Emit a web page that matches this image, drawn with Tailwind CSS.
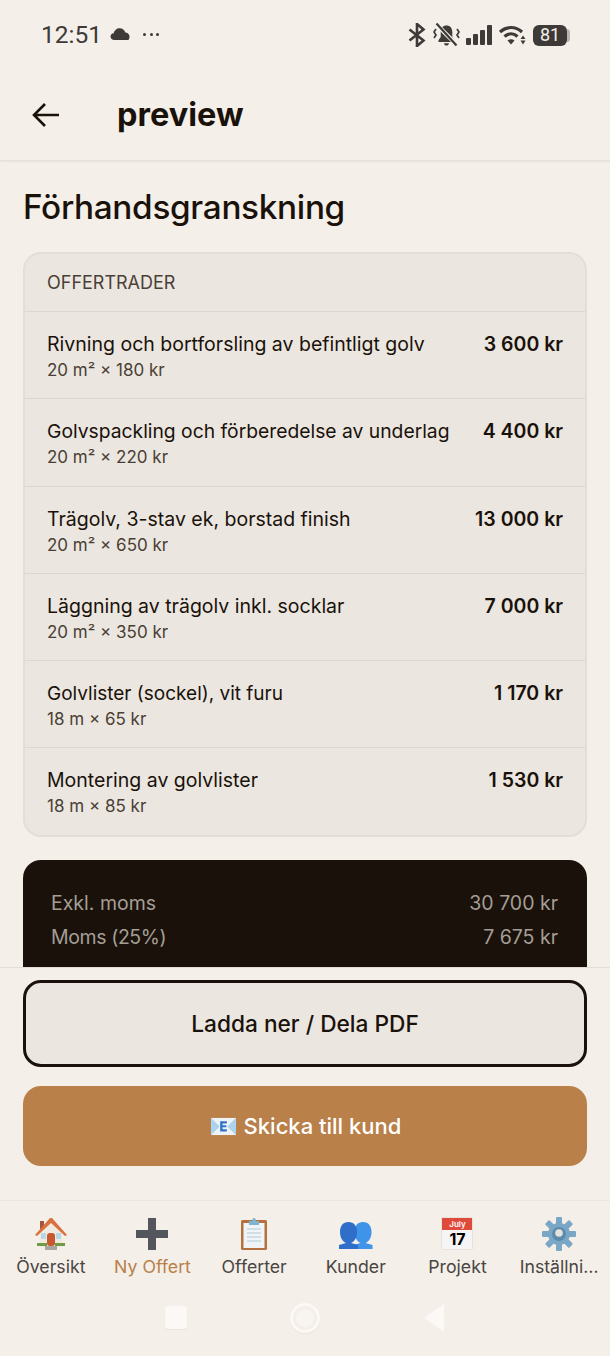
<!DOCTYPE html>
<html lang="en">
<head>
  <meta charset="UTF-8" />
  <meta name="viewport" content="width=device-width, initial-scale=1" />
  <title>preview</title>
  <script src="https://cdn.jsdelivr.net/npm/@tailwindcss/browser@4"></script>
</head>
<body class="w-[610px] h-[1356px] overflow-hidden bg-[#f4efe9] font-['Inter',sans-serif] text-[#1a120a] flex flex-col">

  <!-- status bar -->
  <div class="h-[70px] shrink-0 flex items-center justify-between pl-[41px] pr-[40px] text-[#3d3a38]">
    <div class="flex items-center">
      <span class="text-[24.500px] font-['Roboto',sans-serif] leading-none">12:51</span>
      <svg class="ml-[8px] mb-[3px]" width="20" height="14" viewBox="0 0 20 14"><path fill="#3d3a38" d="M4.500 13C2 13 .5 11.500.5 9.600c0-1.800 1.300-3.200 3.200-3.400C4.300 3.300 6.800 1.200 9.700 1.200c2.700 0 4.900 1.800 5.600 4.300 2.400.1 4.200 1.700 4.200 3.900 0 .7-.1 2.500-1.200 3.600z"/></svg>
      <div class="ml-[13px] flex gap-[3.500px] mb-[1px]">
        <span class="w-[3px] h-[3px] rounded-full bg-[#3d3a38]"></span>
        <span class="w-[3px] h-[3px] rounded-full bg-[#3d3a38]"></span>
        <span class="w-[3px] h-[3px] rounded-full bg-[#3d3a38]"></span>
      </div>
    </div>
    <div class="flex items-center">
      <svg width="18" height="24" viewBox="0 0 18 24" fill="none" stroke="#3d3a38" stroke-width="2.600"><path d="M1.500 6.500l14 11L9 23V1l6.500 5.500-14 11"/></svg>
      <svg class="ml-[7px]" width="27" height="24" viewBox="0 0 27 24" fill="none"><path fill="#3d3a38" d="M13.500 2.500c-3.700 0-5.800 2.700-5.800 6.500v5l-2.200 3.300V19h16v-1.700L19.300 14V9c0-3.800-2.100-6.500-5.800-6.500zM11 20.200h5c-.3 1.500-1.200 2.300-2.500 2.300s-2.200-.8-2.500-2.300z"/><path d="M4 2l20 20" stroke="#f4efe9" stroke-width="4.500"/><path d="M3.500 .5l20 22" stroke="#3d3a38" stroke-width="2.200"/><path d="M3 6L1 9l2 3-2 3M24 6l2 3-2 3 2 3" stroke="#3d3a38" stroke-width="1.700"/></svg>
      <div class="ml-[6px] flex items-end gap-[2px] h-[20px]">
        <span class="w-[5px] h-[7px] bg-[#3d3a38] rounded-[1px]"></span>
        <span class="w-[5px] h-[11px] bg-[#3d3a38] rounded-[1px]"></span>
        <span class="w-[5px] h-[15px] bg-[#3d3a38] rounded-[1px]"></span>
        <span class="w-[5px] h-[20px] bg-[#3d3a38] rounded-[1px]"></span>
      </div>
      <svg class="ml-[7px]" width="27" height="20" viewBox="0 0 27 20" fill="none" stroke="#3d3a38" stroke-width="3.200"><path d="M1 7c6.500-6 15.500-6 22 0"/><path d="M5.500 11.500c4-3.500 9-3.500 13 0"/><path fill="#3d3a38" stroke="none" d="M8.500 15.500c2-1.700 5-1.700 7 0L12 19.500z"/><path fill="#3d3a38" stroke="none" d="M24 10.500l2.500 3.500h-5zM24 19.500l2.500-4h-5z"/></svg>
      <div class="ml-[7px] flex items-center">
        <div class="w-[34px] h-[21px] rounded-[6px] bg-[#3d3a38] text-[#f4efe9] text-[18px] font-['Roboto',sans-serif] leading-none flex items-center justify-center">81</div>
        <div class="w-[3px] h-[13px] bg-[#b9b4ae] rounded-r-[3px]"></div>
      </div>
    </div>
  </div>

  <!-- header -->
  <div class="h-[91px] shrink-0 flex items-center pl-[32px] border-b border-[#e5e0da] shadow-[0_1px_2px_rgba(0,0,0,0.05)] relative">
    <svg width="28" height="26" viewBox="0 0 28 26" fill="none" stroke="#1a120a" stroke-width="2.600"><path d="M27 13H2M13 2L2 13l11 11"/></svg>
    <h2 class="ml-[57px] text-[32.500px] font-bold leading-none">preview</h2>
  </div>

  <!-- scroll area -->
  <div class="flex-1 min-h-0 overflow-hidden px-[23px]">
    <h1 class="text-[33.300px] font-medium leading-[46px] mt-[23px] mb-[22px] tracking-[-0.3px]">Förhandsgranskning</h1>

    <div class="rounded-[18px] border-2 border-[#e3ded7] bg-[#ebe6e0] overflow-hidden">
      <div class="h-[58px] flex items-center pl-[22px] text-[18px] text-[#4a3f35] border-b border-[#dcd7d0]">OFFERTRADER</div>

      <div class="h-[87px] flex justify-between pl-[22px] pr-[22px] pt-[19px] border-b border-[#dcd7d0]">
        <div>
          <div class="text-[19.500px] leading-[27px]">Rivning och bortforsling av befintligt golv</div>
          <div class="text-[17px] leading-[24px] text-[#4a3f35]">20 m² × 180 kr</div>
        </div>
        <div class="text-[19.500px] leading-[27px] font-semibold">3 600 kr</div>
      </div>
      <div class="h-[88px] flex justify-between pl-[22px] pr-[22px] pt-[19px] border-b border-[#dcd7d0]">
        <div>
          <div class="text-[19.300px] leading-[27px]">Golvspackling och förberedelse av underlag</div>
          <div class="text-[17px] leading-[24px] text-[#4a3f35]">20 m² × 220 kr</div>
        </div>
        <div class="text-[19.500px] leading-[27px] font-semibold">4 400 kr</div>
      </div>
      <div class="h-[87px] flex justify-between pl-[22px] pr-[22px] pt-[19px] border-b border-[#dcd7d0]">
        <div>
          <div class="text-[19.500px] leading-[27px]">Trägolv, 3-stav ek, borstad finish</div>
          <div class="text-[17px] leading-[24px] text-[#4a3f35]">20 m² × 650 kr</div>
        </div>
        <div class="text-[19.500px] leading-[27px] font-semibold">13 000 kr</div>
      </div>
      <div class="h-[87px] flex justify-between pl-[22px] pr-[22px] pt-[19px] border-b border-[#dcd7d0]">
        <div>
          <div class="text-[19.500px] leading-[27px]">Läggning av trägolv inkl. socklar</div>
          <div class="text-[17px] leading-[24px] text-[#4a3f35]">20 m² × 350 kr</div>
        </div>
        <div class="text-[19.500px] leading-[27px] font-semibold">7 000 kr</div>
      </div>
      <div class="h-[87px] flex justify-between pl-[22px] pr-[22px] pt-[19px] border-b border-[#dcd7d0]">
        <div>
          <div class="text-[19px] leading-[27px]">Golvlister (sockel), vit furu</div>
          <div class="text-[17px] leading-[24px] text-[#4a3f35]">18 m × 65 kr</div>
        </div>
        <div class="text-[19.500px] leading-[27px] font-semibold">1 170 kr</div>
      </div>
      <div class="h-[87px] flex justify-between pl-[22px] pr-[22px] pt-[19px]">
        <div>
          <div class="text-[19.500px] leading-[27px]">Montering av golvlister</div>
          <div class="text-[17px] leading-[24px] text-[#4a3f35]">18 m × 85 kr</div>
        </div>
        <div class="text-[19.500px] leading-[27px] font-semibold">1 530 kr</div>
      </div>
    </div>

    <div class="mt-[23px] h-[160px] rounded-t-[18px] bg-[#1a120a] pl-[28px] pr-[29px] pt-[26px] text-[19.500px] leading-[34px] text-[#a59e96]">
      <div class="flex justify-between"><span>Exkl. moms</span><span>30 700 kr</span></div>
      <div class="flex justify-between"><span class="tracking-[-0.4px]">Moms (25%)</span><span>7 675 kr</span></div>
    </div>
  </div>

  <!-- actions -->
  <div class="h-[233px] shrink-0 border-t border-[#e3ded7] bg-[#f4efe9] px-[23px] pt-[12px]">
    <button class="w-full h-[87px] pt-[1px] rounded-[18px] border-[3px] border-[#1a120a] bg-[#ebe6e0] text-[22.700px] font-medium">Ladda ner / Dela PDF</button>
    <button class="w-full h-[80px] mt-[19px] rounded-[18px] bg-[#b98049] text-white text-[22px] font-medium flex items-center justify-center pl-[2px]">
      <svg class="mr-[8px]" width="25" height="19" viewBox="0 0 26 20"><rect y="1" width="26" height="18" fill="#eef3f8"/><path d="M0 1l9 9-9 9zM26 1l-9 9 9 9z" fill="#a9d3ef"/><path d="M9.500 4.500h7v2.300H12v1.900h4v2.200h-4v2h4.500v2.300h-7z" fill="#2f74c8"/></svg>
      Skicka till kund
    </button>
  </div>

  <!-- tab bar -->
  <div class="h-[96px] shrink-0 grid grid-cols-6 pt-[16px] text-[17.700px] leading-[24px] text-[#4a4541] text-center border-t border-[#ece7e1]">
    <div class="flex flex-col items-center">
      <svg width="34" height="34" viewBox="0 0 34 34">
        <path d="M6 15L17 6l11 9v15H6z" fill="#efe9df"/>
        <path d="M6 4h4v8H6z" fill="#a8543a"/>
        <path d="M1 18L16 1h2l15 17-2 1L17 6 3 19z" fill="#d9713f"/>
        <rect x="13" y="16" width="8" height="13" rx="3" fill="#c8582f"/>
        <rect x="7" y="16" width="5" height="6" fill="#b8d7e6"/>
        <rect x="22" y="16" width="5" height="6" fill="#b8d7e6"/>
        <rect x="3" y="26" width="10" height="3" fill="#6f9a46"/>
        <rect x="21" y="26" width="10" height="3" fill="#6f9a46"/>
        <rect x="11" y="29" width="12" height="4" fill="#a9a6a2"/>
      </svg>
      <span class="mt-[4px]">Översikt</span>
    </div>
    <div class="flex flex-col items-center text-[#b98049]">
      <svg width="34" height="34" viewBox="0 0 34 34"><path d="M13 1h8v12h12v8H21v12h-8V21H1v-8h12z" fill="#54565e"/></svg>
      <span class="mt-[4px]">Ny Offert</span>
    </div>
    <div class="flex flex-col items-center">
      <svg width="34" height="34" viewBox="0 0 34 34">
        <rect x="4" y="3" width="26" height="30" rx="1.500" fill="#b5703f"/>
        <rect x="6.500" y="6" width="21" height="25" fill="#f1f4f6"/>
        <path d="M10 12h14M10 16h14M10 20h14M10 24h14" stroke="#c4d6e2" stroke-width="1.300"/>
        <path d="M12 4h3c0-4 4-4 4 0h3v4H12z" fill="#7fb3cf"/>
      </svg>
      <span class="mt-[4px]">Offerter</span>
    </div>
    <div class="flex flex-col items-center">
      <svg width="34" height="34" viewBox="0 0 34 34">
        <path d="M15 32v-4l7-2c-4-2-6-6-6-11 0-6 3-10 8.500-10S33 9 33 15c0 5-2 9-6 11l7 2v4z" fill="#3f93e8" transform="translate(-.5 0)"/>
        <path d="M0 32v-4l7-2c-4-2-6-6-6-11C1 9 4 5 9.500 5S18 9 18 15c0 5-2 9-6 11l7 2v4z" fill="#2f6fc9"/>
      </svg>
      <span class="mt-[4px]">Kunder</span>
    </div>
    <div class="flex flex-col items-center">
      <div class="w-[30px] h-[31px] mt-[1px] flex flex-col bg-[#f5f5f5] shadow-[0_0_1px_rgba(0,0,0,0.3)]">
        <div class="h-[12px] bg-[#e04a3b] text-white text-[8px] leading-[12px] font-semibold">July</div>
        <div class="h-[19px] text-black text-[16px] leading-[19px] font-bold">17</div>
      </div>
      <span class="mt-[6px]">Projekt</span>
    </div>
    <div class="flex flex-col items-center">
      <svg width="34" height="34" viewBox="0 0 34 34">
        <g fill="#7aa7c5">
          <circle cx="17" cy="17" r="11"/>
          <rect x="14" y="0" width="6" height="34" rx="1"/>
          <rect x="14" y="0" width="6" height="34" rx="1" transform="rotate(45 17 17)"/>
          <rect x="14" y="0" width="6" height="34" rx="1" transform="rotate(90 17 17)"/>
          <rect x="14" y="0" width="6" height="34" rx="1" transform="rotate(135 17 17)"/>
        </g>
        <circle cx="17" cy="17" r="7" fill="#5c8cad"/>
        <circle cx="17" cy="16" r="3.800" fill="#e6e2dc"/>
      </svg>
      <span class="mt-[4px]">Inställni…</span>
    </div>
  </div>

  <!-- android nav -->
  <div class="h-[60px] shrink-0 relative">
    <div class="absolute left-[165px] top-[10px] w-[22px] h-[23px] rounded-[4px] bg-[#fbf8f5] shadow-[0_1px_2px_rgba(0,0,0,0.05)]"></div>
    <div class="absolute left-[290px] top-[7px] w-[30px] h-[30px] rounded-full border-[3px] border-[#fbf8f5] shadow-[0_1px_2px_rgba(0,0,0,0.05)] flex items-center justify-center">
      <div class="w-[18px] h-[18px] rounded-full bg-[#f8f4f0]"></div>
    </div>
    <svg class="absolute left-[423px] top-[7px]" width="22" height="30" viewBox="0 0 22 30"><path d="M21 1v28L1 15z" fill="#fbf8f5"/></svg>
  </div>
</body>
</html>
